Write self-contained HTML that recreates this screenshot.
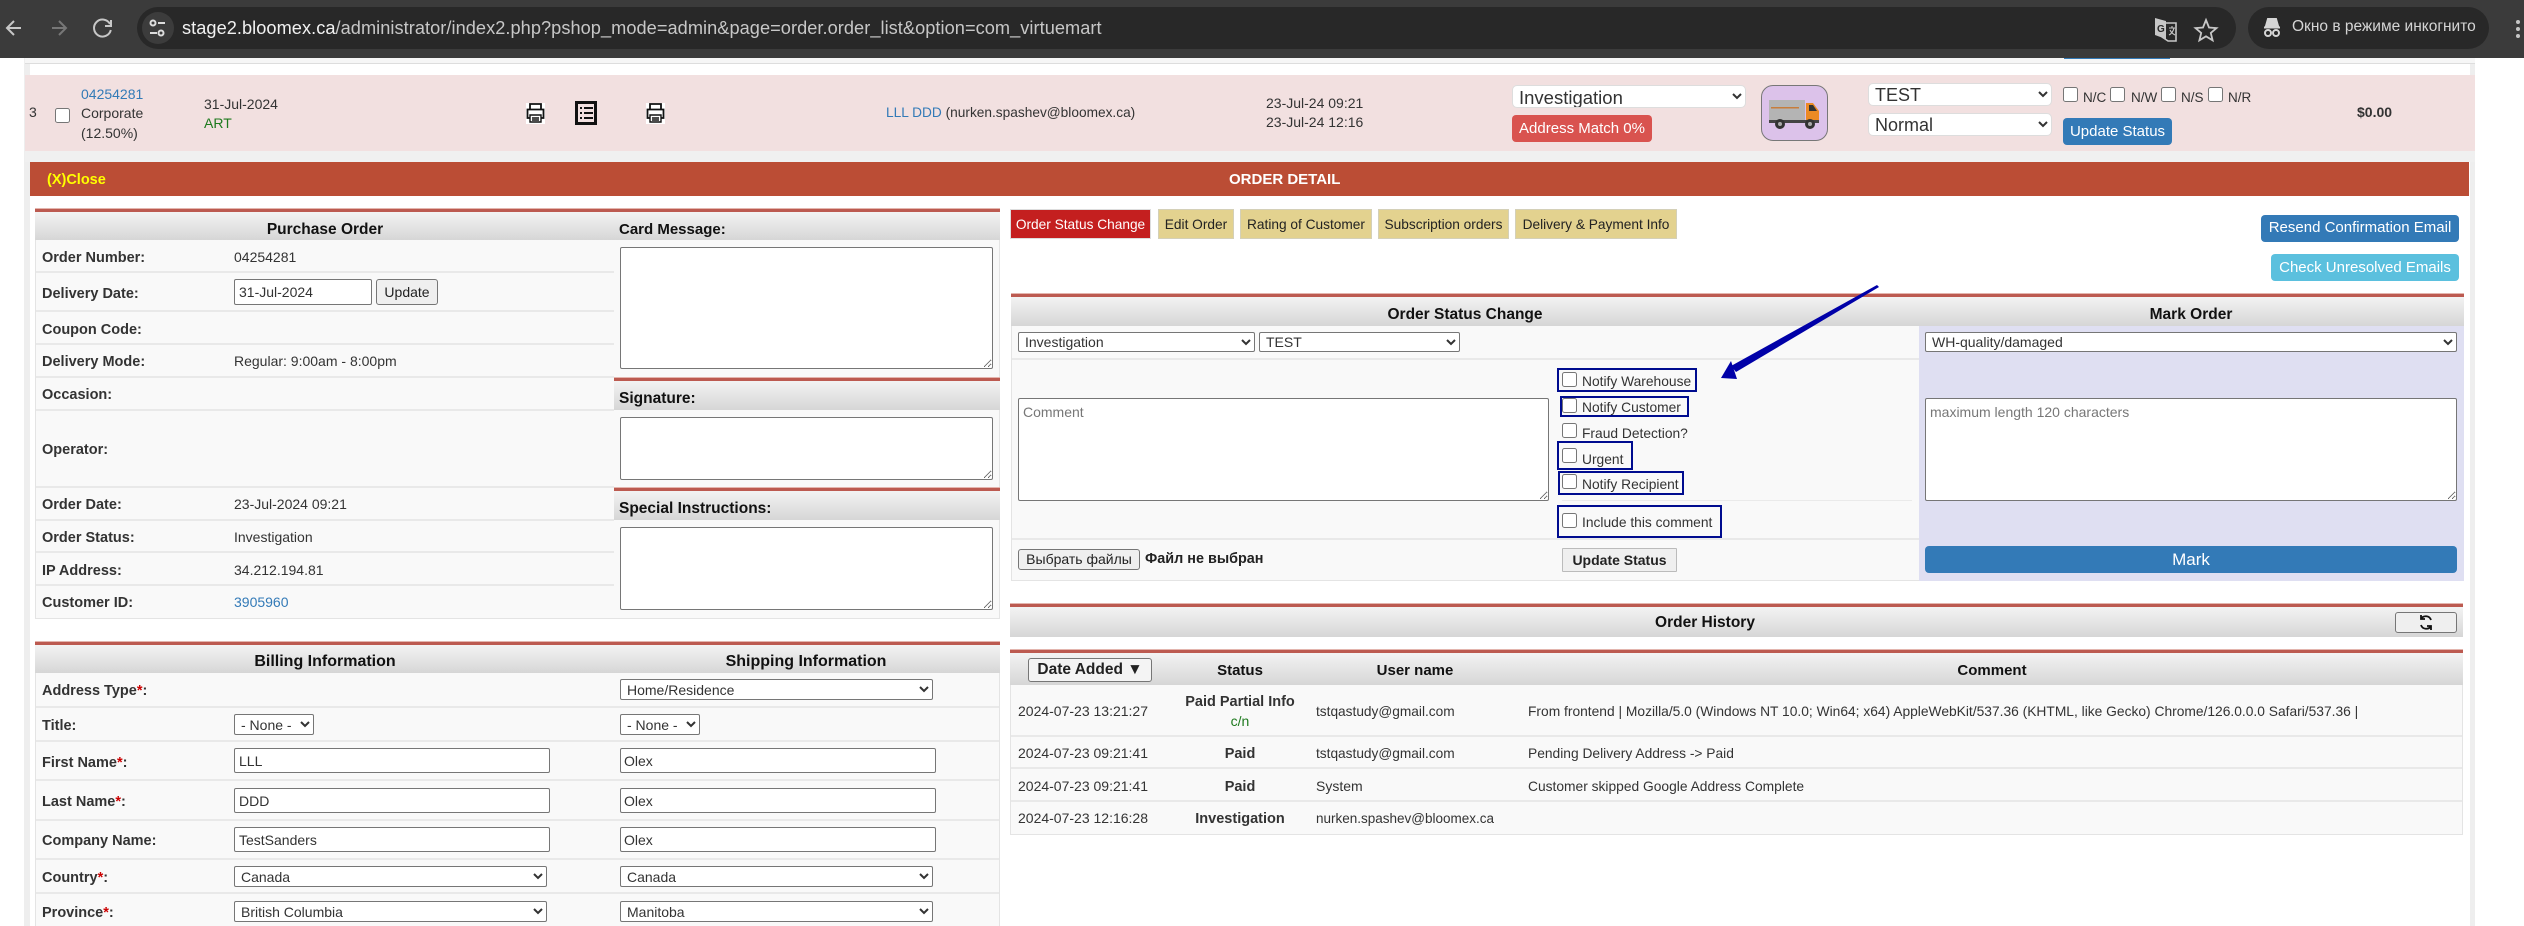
<!DOCTYPE html>
<html><head><meta charset="utf-8"><title>Order detail</title>
<style>
html,body{margin:0;padding:0;background:#fff;}
body{position:relative;width:2524px;height:926px;overflow:hidden;font-family:"Liberation Sans","Noto Sans CJK JP",sans-serif;font-size:14px;color:#333;}
div,select,input,textarea,button,svg{position:absolute;box-sizing:border-box;}
.t{white-space:nowrap;line-height:20px;height:20px;}
.c{transform:translateX(-50%);}
.b{font-weight:bold;}
.k{font-weight:bold;color:#333;font-size:14.5px;margin-top:1px;}
.h{font-weight:bold;color:#111;font-size:15.5px;}
.bar{height:3px;background:#bc5a50;box-shadow:0 -1px 0 #e3b5ae,0 1px 0 #f3d9d2;}
.g{background:linear-gradient(#f3f3f3,#d6d6d6);}
.l{height:2px;background:#e9e9e9;}
.p{background:#f9f9f9;}
select{font:14px "Liberation Sans",sans-serif;color:#333;background:#fff;border:1px solid #767676;border-radius:2px;padding:0 2px;margin:0;}
input[type=text]{font:14px "Liberation Sans",sans-serif;color:#333;background:#fff;border:1px solid #767676;border-radius:2px;padding:0 4px;margin:0;}
input[type=checkbox]{margin:0;width:15px;height:15px;}
textarea{font:14px "Liberation Sans",sans-serif;background:#fff;border:1px solid #767676;border-radius:2px;margin:0;padding:5px 4px;}
textarea::placeholder{color:#777;}
.btn{border-radius:4px;color:#fff;text-align:center;font-size:15px;}
.tab{top:209px;height:30px;background:#e3d28f;border:1px solid #d4d0b8;color:#222;font-size:13.7px;line-height:29px;text-align:center;white-space:nowrap;}
.bx{border:2px solid #000c8f;}
.gbtn{background:#efefef;border:1px solid #767676;border-radius:3px;color:#222;text-align:center;white-space:nowrap;}
.ps select{font-size:18.5px;border:1px solid #ddd;border-radius:5px;}
.ps .s2{font-size:18px;}
</style></head><body>

<!-- browser bar -->
<div style="left:0;top:0;width:2524px;height:58px;background:#3b3b3b"></div>
<div style="left:137px;top:7px;width:2099px;height:42px;background:#282828;border-radius:21px"></div>
<div style="left:142px;top:12px;width:32px;height:32px;background:#3c3c3c;border-radius:16px"></div>
<svg style="left:0;top:0" width="190" height="58" fill="none" stroke-width="2">
<path d="M21 28H7M14 21l-7 7 7 7" stroke="#c7c7c7"/>
<path d="M52 28h14M59 21l7 7-7 7" stroke="#777"/>
<path d="M110 24a8.5 8.5 0 1 0 .8 6M111 20v6h-6" stroke="#c7c7c7"/>
<circle cx="153" cy="23" r="2.5" stroke="#ddd"/><path d="M158 23h7M150 33h7" stroke="#ddd"/><circle cx="161" cy="33" r="2.5" stroke="#ddd"/>
</svg>
<div class="t" style="left:182px;top:18px;font-size:18.2px;color:#c7c7c7;letter-spacing:.05px"><span style="color:#f1f1f1">stage2.bloomex.ca</span>/administrator/index2.php?pshop_mode=admin&amp;page=order.order_list&amp;option=com_virtuemart</div>
<svg style="left:2150px;top:14px" width="76" height="30" fill="none">
<path d="M12 9h14v18h-8l-6-4z" stroke="#c7c7c7" stroke-width="1.6"/>
<path d="M5 4l11 3v18L5 21z" fill="#c7c7c7"/>
<text x="7" y="18" font-size="10" font-weight="bold" fill="#282828" font-family="Liberation Sans">G</text>
<path d="M19 14h6M22 12v2M24 14c-1 4-3 6-5 7M20 16c1 2 3 4 5 5" stroke="#c7c7c7" stroke-width="1.1"/>
<path d="M56 6l3 7.500 7.500.6-5.700 4.900 1.800 7.300-6.600-4-6.600 4 1.800-7.300-5.700-4.900 7.500-.6z" stroke="#c7c7c7" stroke-width="1.800"/>
</svg>
<div style="left:2248px;top:7px;width:241px;height:42px;background:#282828;border-radius:21px"></div>
<svg style="left:2262px;top:16px" width="22" height="22" fill="none" stroke="#d5d5d5" stroke-width="2">
<path d="M6 3h8l2 7H4z" fill="#d5d5d5"/><path d="M2 11.500h16"/><circle cx="6" cy="17" r="3"/><circle cx="14" cy="17" r="3"/>
</svg>
<div class="t" style="left:2292px;top:17px;font-size:15.5px;color:#d5d5d5">Окно в режиме инкогнито</div>
<div style="left:2516px;top:20px;width:4px;height:4px;background:#c7c7c7;border-radius:2px"></div>
<div style="left:2516px;top:27px;width:4px;height:4px;background:#c7c7c7;border-radius:2px"></div>
<div style="left:2516px;top:34px;width:4px;height:4px;background:#c7c7c7;border-radius:2px"></div>

<!-- page frame -->
<div style="left:24px;top:58px;width:6px;height:868px;background:#eee"></div>
<div style="left:2470px;top:58px;width:5px;height:868px;background:#eee"></div>
<div style="left:25px;top:58px;width:2450px;height:6px;background:#f6f6f6;border-bottom:1px solid #ddd"></div>
<div style="left:2064px;top:58px;width:106px;height:1px;background:#337ab7"></div>

<!-- order row -->
<div style="left:25px;top:75px;width:2450px;height:76px;background:#f2e0e0"></div>
<div style="left:25px;top:151px;width:2450px;height:11px;background:#f0f0f0"></div>
<div class="t" style="left:29px;top:102px">3</div>
<input type="checkbox" style="left:55px;top:108px">
<div class="t" style="left:81px;top:84px;color:#337ab7">04254281</div>
<div class="t" style="left:81px;top:103px">Corporate</div>
<div class="t" style="left:81px;top:123px">(12.50%)</div>
<div class="t" style="left:204px;top:94px">31-Jul-2024</div>
<div class="t" style="left:204px;top:113px;color:#1e7a1e">ART</div>
<svg style="left:523px;top:100px" width="147" height="26" fill="none" stroke="#111" stroke-width="1.800">
<path fill="#fff" stroke="none" d="M3 3h19v21H3z"/><path d="M7 9V4h11v5M7 18H4.500V9.500h16V18H18"/><path d="M7 15h11v7H7zM9 18h7M9 20h7" stroke-width="1.400"/>
<rect x="53.500" y="2.500" width="19" height="21" stroke-width="3"/><path d="M57 8h2M61 8h9M57 13h2M61 13h9M57 18h2M61 18h9" stroke-width="2"/>
<g transform="translate(120 0)"><path fill="#fff" stroke="none" d="M3 3h19v21H3z"/><path d="M7 9V4h11v5M7 18H4.500V9.500h16V18H18"/><path d="M7 15h11v7H7zM9 18h7M9 20h7" stroke-width="1.400"/></g>
</svg>
<div class="t" style="left:886px;top:103px;font-size:13.7px"><span style="color:#337ab7">LLL DDD</span> (nurken.spashev@bloomex.ca)</div>
<div class="t" style="left:1266px;top:93px">23-Jul-24 09:21</div>
<div class="t" style="left:1266px;top:112px">23-Jul-24 12:16</div>
<div class="ps">
<select style="left:1512px;top:85px;width:234px;height:23px"><option>Investigation</option></select>
<select class="s2" style="left:1868px;top:83px;width:184px;height:23px"><option>TEST</option></select>
<select class="s2" style="left:1868px;top:113px;width:184px;height:23px"><option>Normal</option></select>
</div>
<div class="btn" style="left:1512px;top:115px;width:140px;height:27px;background:#d9534f;line-height:27px">Address Match 0%</div>
<div style="left:1761px;top:85px;width:67px;height:56px;background:#dcc2ea;border:1px solid #777;border-radius:12px"></div>
<svg style="left:1768px;top:97px" width="54" height="36">
<rect x="1" y="3" width="36" height="20" fill="#b4b4b4"/><rect x="3" y="10" width="28" height="1.500" fill="#c77d3c"/>
<path d="M38 6h7l6 8v10H38z" fill="#ec8a24"/><path d="M41 8h4l4 6h-8z" fill="#333"/>
<rect x="1" y="23" width="50" height="3" fill="#444"/>
<circle cx="12" cy="27" r="5" fill="#333"/><circle cx="42" cy="27" r="5" fill="#333"/><circle cx="12" cy="27" r="2" fill="#aaa"/><circle cx="42" cy="27" r="2" fill="#aaa"/>
</svg>
<input type="checkbox" style="left:2063px;top:87px"><div class="t" style="left:2083px;top:88px;font-size:13.500px">N/C</div>
<input type="checkbox" style="left:2110px;top:87px"><div class="t" style="left:2131px;top:88px;font-size:13.500px">N/W</div>
<input type="checkbox" style="left:2161px;top:87px"><div class="t" style="left:2181px;top:88px;font-size:13.500px">N/S</div>
<input type="checkbox" style="left:2208px;top:87px"><div class="t" style="left:2228px;top:88px;font-size:13.500px">N/R</div>
<div class="btn" style="left:2063px;top:118px;width:109px;height:27px;background:#337ab7;line-height:27px">Update Status</div>
<div class="t b" style="left:2357px;top:102px">$0.00</div>

<!-- order detail bar -->
<div style="left:30px;top:162px;width:2439px;height:34px;background:#bb4d35"></div>
<div class="t b" style="left:47px;top:170px;color:#ff0;font-size:14.5px">(X)Close</div>
<div class="t b" style="left:1229px;top:170px;color:#fff;font-size:15px">ORDER DETAIL</div>

<!-- purchase panel -->
<div class="p" style="left:35px;top:209px;width:965px;height:410px;border:1px solid #e4e4e4;border-top:0"></div>
<div class="bar" style="left:35px;top:209px;width:965px"></div>
<div class="g" style="left:35px;top:212px;width:965px;height:28px"></div>
<div class="t h c" style="left:325px;top:220px">Purchase Order</div>
<div class="t h" style="left:619px;top:220px;font-size:15px">Card Message:</div>
<div class="l" style="left:36px;top:271px;width:578px"></div>
<div class="l" style="left:36px;top:310px;width:578px"></div>
<div class="l" style="left:36px;top:343px;width:578px"></div>
<div class="l" style="left:36px;top:376px;width:578px"></div>
<div class="l" style="left:36px;top:409px;width:578px"></div>
<div class="l" style="left:36px;top:486px;width:578px"></div>
<div class="l" style="left:36px;top:519px;width:578px"></div>
<div class="l" style="left:36px;top:551px;width:578px"></div>
<div class="l" style="left:36px;top:584px;width:578px"></div>
<div class="t k" style="left:42px;top:247px">Order Number:</div><div class="t" style="left:234px;top:247px">04254281</div>
<div class="t k" style="left:42px;top:283px">Delivery Date:</div>
<input type="text" value="31-Jul-2024" style="left:234px;top:279px;width:138px;height:26px">
<div class="gbtn" style="left:376px;top:279px;width:62px;height:26px;line-height:24px">Update</div>
<div class="t k" style="left:42px;top:319px">Coupon Code:</div>
<div class="t k" style="left:42px;top:351px">Delivery Mode:</div><div class="t" style="left:234px;top:351px">Regular: 9:00am - 8:00pm</div>
<div class="t k" style="left:42px;top:384px">Occasion:</div>
<div class="t k" style="left:42px;top:439px">Operator:</div>
<div class="t k" style="left:42px;top:494px">Order Date:</div><div class="t" style="left:234px;top:494px">23-Jul-2024 09:21</div>
<div class="t k" style="left:42px;top:527px">Order Status:</div><div class="t" style="left:234px;top:527px">Investigation</div>
<div class="t k" style="left:42px;top:560px">IP Address:</div><div class="t" style="left:234px;top:560px">34.212.194.81</div>
<div class="t k" style="left:42px;top:592px">Customer ID:</div><div class="t" style="left:234px;top:592px;color:#337ab7">3905960</div>
<textarea style="left:620px;top:247px;width:373px;height:122px"></textarea>
<div class="bar" style="left:614px;top:378px;width:386px"></div>
<div class="g" style="left:614px;top:381px;width:386px;height:29px"></div>
<div class="t h" style="left:619px;top:389px">Signature:</div>
<textarea style="left:620px;top:417px;width:373px;height:63px"></textarea>
<div class="bar" style="left:614px;top:488px;width:386px"></div>
<div class="g" style="left:614px;top:491px;width:386px;height:29px"></div>
<div class="t h" style="left:619px;top:499px">Special Instructions:</div>
<textarea style="left:620px;top:527px;width:373px;height:83px"></textarea>

<!-- billing panel -->
<div class="p" style="left:35px;top:642px;width:965px;height:284px;border:1px solid #e4e4e4;border-top:0;border-bottom:0"></div>
<div class="bar" style="left:35px;top:642px;width:965px"></div>
<div class="g" style="left:35px;top:645px;width:965px;height:28px"></div>
<div class="t h c" style="left:325px;top:652px;font-size:16px">Billing Information</div>
<div class="t h c" style="left:806px;top:652px;font-size:16px">Shipping Information</div>
<div class="l" style="left:36px;top:706px;width:963px"></div>
<div class="l" style="left:36px;top:740px;width:963px"></div>
<div class="l" style="left:36px;top:779px;width:963px"></div>
<div class="l" style="left:36px;top:819px;width:963px"></div>
<div class="l" style="left:36px;top:858px;width:963px"></div>
<div class="l" style="left:36px;top:892px;width:963px"></div>
<div class="t k" style="left:42px;top:680px">Address Type<span style="color:#c00">*</span>:</div>
<select style="left:620px;top:679px;width:313px;height:21px"><option>Home/Residence</option></select>
<div class="t k" style="left:42px;top:715px">Title:</div>
<select style="left:234px;top:714px;width:80px;height:21px"><option>- None -</option></select>
<select style="left:620px;top:714px;width:80px;height:21px"><option>- None -</option></select>
<div class="t k" style="left:42px;top:752px">First Name<span style="color:#c00">*</span>:</div>
<input type="text" value="LLL" style="left:234px;top:748px;width:316px;height:25px">
<input type="text" value="Olex" style="left:620px;top:748px;width:316px;height:25px;padding-left:3px">
<div class="t k" style="left:42px;top:791px">Last Name<span style="color:#c00">*</span>:</div>
<input type="text" value="DDD" style="left:234px;top:788px;width:316px;height:25px">
<input type="text" value="Olex" style="left:620px;top:788px;width:316px;height:25px;padding-left:3px">
<div class="t k" style="left:42px;top:830px">Company Name:</div>
<input type="text" value="TestSanders" style="left:234px;top:827px;width:316px;height:25px">
<input type="text" value="Olex" style="left:620px;top:827px;width:316px;height:25px;padding-left:3px">
<div class="t k" style="left:42px;top:867px">Country<span style="color:#c00">*</span>:</div>
<select style="left:234px;top:866px;width:313px;height:21px"><option>Canada</option></select>
<select style="left:620px;top:866px;width:313px;height:21px"><option>Canada</option></select>
<div class="t k" style="left:42px;top:902px">Province<span style="color:#c00">*</span>:</div>
<select style="left:234px;top:901px;width:313px;height:21px"><option>British Columbia</option></select>
<select style="left:620px;top:901px;width:313px;height:21px"><option>Manitoba</option></select>

<!-- tabs -->
<div class="tab" style="left:1010px;width:141px;background:#c41f1f;color:#fff;border-color:#ddd">Order Status Change</div>
<div class="tab" style="left:1158px;width:76px">Edit Order</div>
<div class="tab" style="left:1240px;width:132px">Rating of Customer</div>
<div class="tab" style="left:1378px;width:131px">Subscription orders</div>
<div class="tab" style="left:1515px;width:162px">Delivery &amp; Payment Info</div>
<div class="btn" style="left:2261px;top:215px;width:198px;height:27px;background:#337ab7;line-height:26px">Resend Confirmation Email</div>
<div class="btn" style="left:2271px;top:254px;width:188px;height:27px;background:#5bc0de;line-height:27px">Check Unresolved Emails</div>

<!-- order status panel -->
<div class="p" style="left:1011px;top:294px;width:1453px;height:287px;border:1px solid #e4e4e4;border-top:0"></div>
<div style="left:1919px;top:326px;width:545px;height:255px;background:#dfdff2"></div>
<div class="bar" style="left:1011px;top:294px;width:1453px"></div>
<div class="g" style="left:1011px;top:297px;width:1453px;height:29px"></div>
<div class="t h c" style="left:1465px;top:305px">Order Status Change</div>
<div class="t h c" style="left:2191px;top:305px">Mark Order</div>
<div class="l" style="left:1012px;top:358px;width:907px"></div>
<div class="l" style="left:1012px;top:538px;width:907px"></div>
<div style="left:1562px;top:500px;width:350px;height:1px;background:#eaeaea"></div>
<select style="left:1018px;top:332px;width:237px;height:20px"><option>Investigation</option></select>
<select style="left:1259px;top:332px;width:201px;height:20px"><option>TEST</option></select>
<textarea placeholder="Comment" style="left:1018px;top:398px;width:531px;height:103px"></textarea>
<div class="bx" style="left:1557px;top:368px;width:140px;height:24px"></div>
<div class="bx" style="left:1560px;top:396px;width:129px;height:21px"></div>
<div class="bx" style="left:1557px;top:441px;width:76px;height:29px"></div>
<div class="bx" style="left:1558px;top:471px;width:126px;height:24px"></div>
<div class="bx" style="left:1557px;top:505px;width:165px;height:33px"></div>
<input type="checkbox" style="left:1562px;top:372px"><div class="t" style="left:1582px;top:372px;font-size:13.800px">Notify Warehouse</div>
<input type="checkbox" style="left:1562px;top:398px"><div class="t" style="left:1582px;top:398px;font-size:13.800px">Notify Customer</div>
<input type="checkbox" style="left:1562px;top:423px"><div class="t" style="left:1582px;top:424px;font-size:13.800px">Fraud Detection?</div>
<input type="checkbox" style="left:1562px;top:448px"><div class="t" style="left:1582px;top:450px;font-size:13.800px">Urgent</div>
<input type="checkbox" style="left:1562px;top:474px"><div class="t" style="left:1582px;top:475px;font-size:13.800px">Notify Recipient</div>
<input type="checkbox" style="left:1562px;top:513px"><div class="t" style="left:1582px;top:513px;font-size:13.800px">Include this comment</div>
<div class="gbtn" style="left:1018px;top:549px;width:122px;height:21px;line-height:19px">Выбрать файлы</div>
<div class="t b" style="left:1145px;top:549px;color:#222;font-size:14.400px">Файл не выбран</div>
<div class="gbtn b" style="left:1562px;top:548px;width:115px;height:24px;line-height:22px;border-color:#bbb;border-radius:1px">Update Status</div>
<select style="left:1925px;top:332px;width:532px;height:20px"><option>WH-quality/damaged</option></select>
<textarea placeholder="maximum length 120 characters" style="left:1925px;top:398px;width:532px;height:103px"></textarea>
<div class="btn" style="left:1925px;top:546px;width:532px;height:27px;background:#337ab7;line-height:27px;font-size:17px">Mark</div>
<svg style="left:1700px;top:280px" width="200" height="110">
<path d="M177 5L179 7 36 92 31 86z" fill="#0000a8"/>
<path d="M21 98L31 81 37 99z" fill="#0000a8"/>
</svg>

<!-- order history -->
<div class="bar" style="left:1010px;top:604px;width:1453px"></div>
<div class="g" style="left:1010px;top:607px;width:1453px;height:30px"></div>
<div class="t h c" style="left:1705px;top:613px">Order History</div>
<div class="gbtn" style="left:2395px;top:612px;width:62px;height:21px"></div>
<svg style="left:2418px;top:614px" width="16" height="17" fill="none" stroke="#111" stroke-width="1.800"><path d="M13 6a5.500 5.500 0 0 0-10-1M3 11a5.500 5.500 0 0 0 10 1M3 1v4h4M13 16v-4H9"/></svg>
<div class="p" style="left:1010px;top:650px;width:1453px;height:185px;border:1px solid #e4e4e4;border-top:0"></div>
<div class="bar" style="left:1010px;top:650px;width:1453px"></div>
<div class="g" style="left:1010px;top:653px;width:1453px;height:32px"></div>
<div class="gbtn b" style="left:1028px;top:658px;width:124px;height:24px;line-height:22px;font-size:15.500px;background:#f4f4f4">Date Added ▼</div>
<div class="t h c" style="left:1240px;top:661px;font-size:15px">Status</div>
<div class="t h c" style="left:1415px;top:661px;font-size:15px">User name</div>
<div class="t h c" style="left:1992px;top:661px;font-size:15px">Comment</div>
<div class="l" style="left:1011px;top:735px;width:1451px"></div>
<div class="l" style="left:1011px;top:767px;width:1451px"></div>
<div class="l" style="left:1011px;top:800px;width:1451px"></div>
<div class="t" style="left:1018px;top:701px">2024-07-23 13:21:27</div>
<div class="t k c" style="left:1240px;top:691px">Paid Partial Info</div>
<div class="t c" style="left:1240px;top:711px;color:#1e7a1e">c/n</div>
<div class="t" style="left:1316px;top:702px;font-size:13.700px">tstqastudy@gmail.com</div>
<div class="t" style="left:1528px;top:702px;font-size:13.800px">From frontend | Mozilla/5.0 (Windows NT 10.0; Win64; x64) AppleWebKit/537.36 (KHTML, like Gecko) Chrome/126.0.0.0 Safari/537.36 |</div>
<div class="t" style="left:1018px;top:743px">2024-07-23 09:21:41</div>
<div class="t k c" style="left:1240px;top:743px">Paid</div>
<div class="t" style="left:1316px;top:744px;font-size:13.700px">tstqastudy@gmail.com</div>
<div class="t" style="left:1528px;top:744px;font-size:13.800px">Pending Delivery Address -&gt; Paid</div>
<div class="t" style="left:1018px;top:776px">2024-07-23 09:21:41</div>
<div class="t k c" style="left:1240px;top:776px">Paid</div>
<div class="t" style="left:1316px;top:776px">System</div>
<div class="t" style="left:1528px;top:777px;font-size:13.800px">Customer skipped Google Address Complete</div>
<div class="t" style="left:1018px;top:808px">2024-07-23 12:16:28</div>
<div class="t k c" style="left:1240px;top:808px">Investigation</div>
<div class="t" style="left:1316px;top:809px;font-size:13.500px">nurken.spashev@bloomex.ca</div>

</body></html>
